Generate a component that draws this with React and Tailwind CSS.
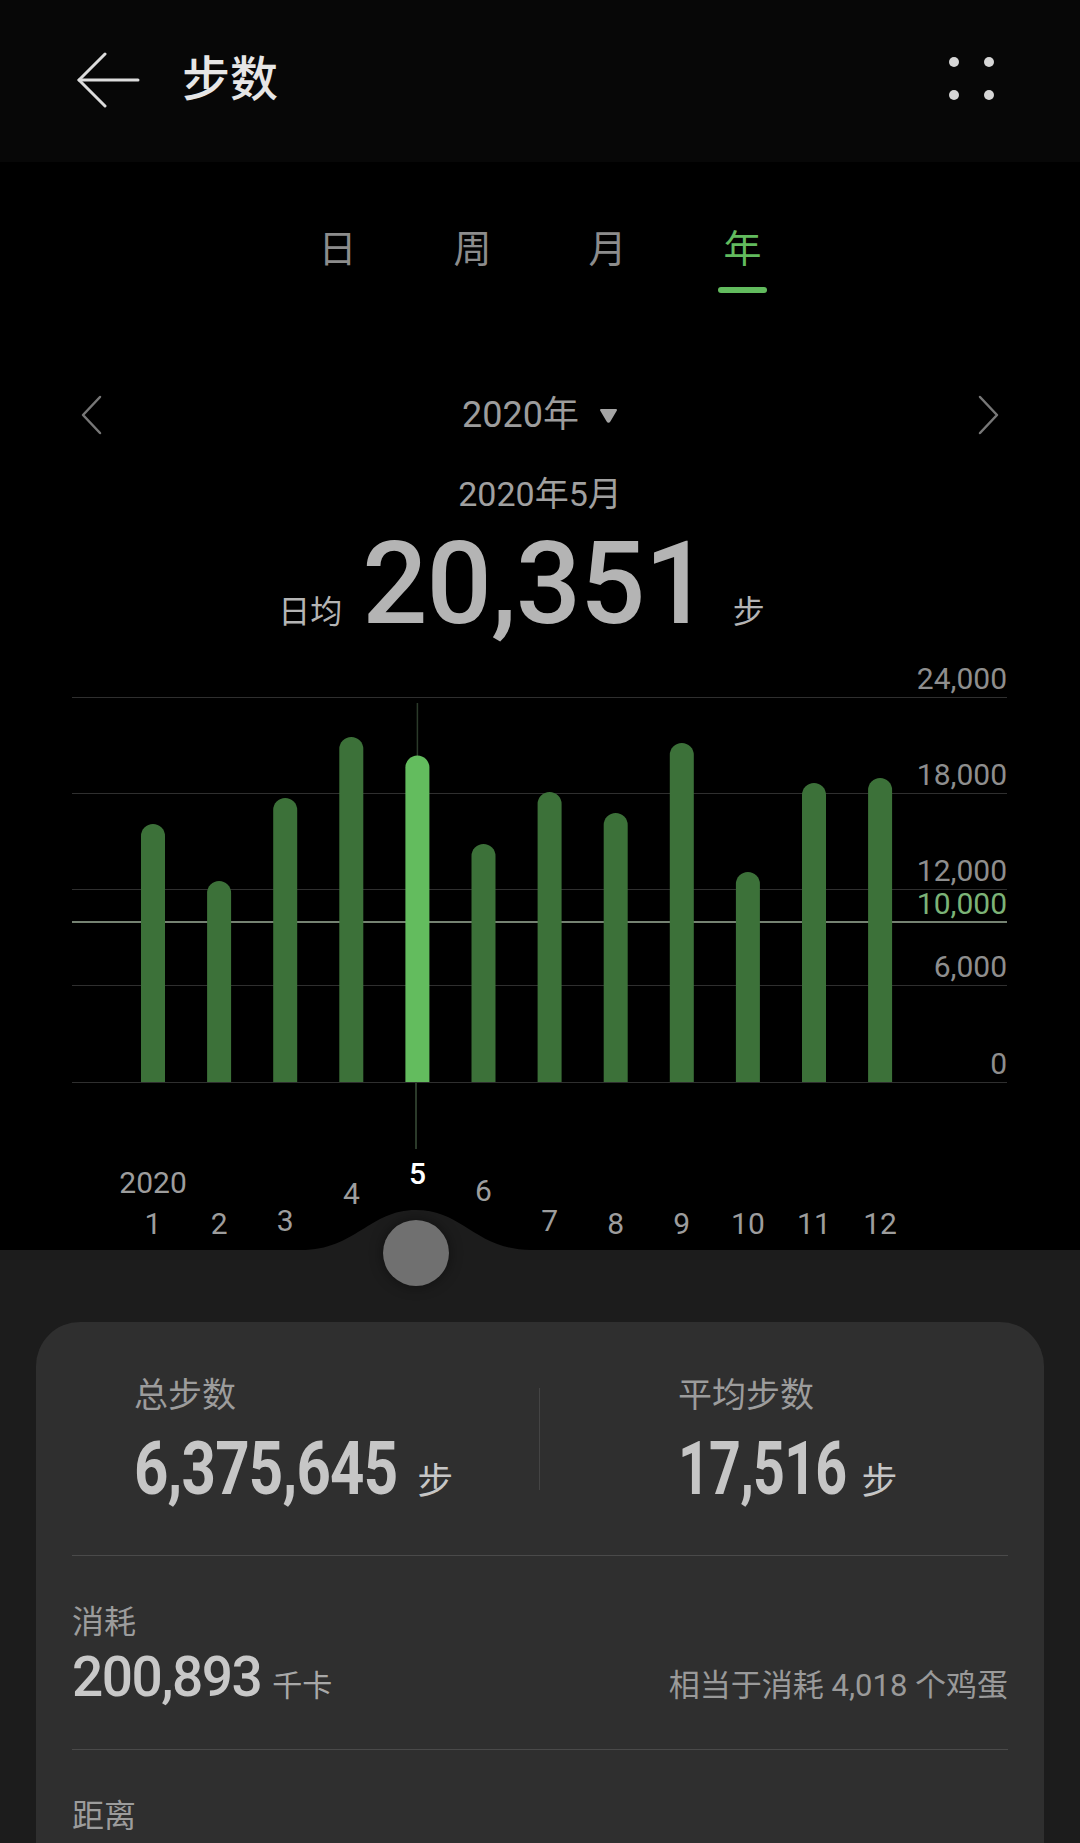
import React from 'react'

const months = [
  { m: '1', v: 16080, mb: 'mb-[11px]' },
  { m: '2', v: 12530, mb: 'mb-[11px]' },
  { m: '3', v: 17700, mb: 'mb-[14px]' },
  { m: '4', v: 21500, mb: 'mb-[41px]' },
  { m: '5', v: 20351, mb: 'mb-[61px]' },
  { m: '6', v: 14840, mb: 'mb-[44px]' },
  { m: '7', v: 18080, mb: 'mb-[14px]' },
  { m: '8', v: 16770, mb: 'mb-[11px]' },
  { m: '9', v: 21130, mb: 'mb-[11px]' },
  { m: '10', v: 13090, mb: 'mb-[11px]' },
  { m: '11', v: 18640, mb: 'mb-[11px]' },
  { m: '12', v: 18950, mb: 'mb-[11px]' },
]

const SELECTED = 4
const BASE = 422
const PLOT_H = 385
const MAX = 24000

// y axis: value, line y inside the plot, label top
const ticks = [
  { label: '24,000', y: 37, top: 'top-[4px]' },
  { label: '18,000', y: 133, top: 'top-[100px]' },
  { label: '12,000', y: 229, top: 'top-[196px]' },
  { label: '6,000', y: 325, top: 'top-[292px]' },
  { label: '0', y: 422, top: 'top-[389px]' },
]

function barPath(cx, v) {
  const top = BASE - (v / MAX) * PLOT_H
  return `M${cx - 12} ${BASE} V${top + 12} A12 12 0 0 1 ${cx + 12} ${top + 12} V${BASE} Z`
}

function Header() {
  return (
    <div className="h-[162px] bg-[#070707] flex items-start justify-between pt-[50px] pl-[77px] pr-[86px]">
      <div className="flex items-center h-[60px]">
        <svg width="64" height="58" viewBox="0 0 64 58" fill="none" stroke="#dcdcdc" strokeWidth="3" strokeLinecap="round" strokeLinejoin="round">
          <path d="M28 3 L2 29 L28 55" />
          <path d="M2 29 H61" />
        </svg>
        <span className="ml-[41px] text-[48px] leading-none font-medium text-[#e6e6e6]">步数</span>
      </div>
      <div className="grid grid-cols-2 gap-x-[25px] gap-y-[23px] mt-[7px]">
        <span className="w-[10px] h-[10px] rounded-full bg-[#d6d6d6]" />
        <span className="w-[10px] h-[10px] rounded-full bg-[#d6d6d6]" />
        <span className="w-[10px] h-[10px] rounded-full bg-[#d6d6d6]" />
        <span className="w-[10px] h-[10px] rounded-full bg-[#d6d6d6]" />
      </div>
    </div>
  )
}

function Tabs() {
  const tabs = ['日', '周', '月', '年']
  return (
    <div className="flex justify-center pt-[68px]">
      {tabs.map((t, i) => (
        <div key={t} className="w-[135px] flex flex-col items-center">
          <span className={i === 3 ? 'text-[38px] leading-none text-[#62bb5e]' : 'text-[38px] leading-none text-[#8c8c8c]'}>{t}</span>
          <span className={i === 3 ? 'mt-[19px] w-[49px] h-[6px] rounded-full bg-[#62bb5e]' : 'mt-[19px] w-[49px] h-[6px]'} />
        </div>
      ))}
    </div>
  )
}

function YearNav() {
  return (
    <div className="mt-[102px] h-[40px] flex items-center justify-between px-[80px]">
      <svg width="22" height="40" viewBox="0 0 22 40" fill="none" stroke="#777" strokeWidth="2.5" strokeLinecap="round" strokeLinejoin="round">
        <path d="M20 2 L3 20 L20 38" />
      </svg>
      <div className="flex items-center gap-[20px]">
        <span className="text-[36px] leading-none text-[#9c9c9c]">2020年</span>
        <svg width="19" height="15" viewBox="0 0 19 15">
          <path d="M2 2 H17 L10.5 13 Q9.5 14.5 8.5 13 Z" fill="#a5a5a5" stroke="#a5a5a5" strokeWidth="2" strokeLinejoin="round" />
        </svg>
      </div>
      <svg width="22" height="40" viewBox="0 0 22 40" fill="none" stroke="#777" strokeWidth="2.5" strokeLinecap="round" strokeLinejoin="round">
        <path d="M2 2 L19 20 L2 38" />
      </svg>
    </div>
  )
}

function Summary() {
  return (
    <div className="flex flex-col items-center">
      <div className="mt-[42px] text-[34px] leading-none text-[#a0a0a0]">2020年5月</div>
      <div className="mt-[15px] flex items-baseline justify-center pr-[37px] text-[#b4b4b4]">
        <span className="text-[32px] leading-none">日均</span>
        <span className="ml-[20px] text-[115px] leading-none font-medium tracking-[-1px]">20,351</span>
        <span className="ml-[24px] text-[32px] leading-none">步</span>
      </div>
    </div>
  )
}

function Chart() {
  const cx = (i) => 81 + i * 66.1
  return (
    <div className="relative mt-[19px] ml-[72px] w-[935px]">
      <div className="relative h-[423px]">
        <svg className="absolute inset-0" width="935" height="423" viewBox="0 0 935 423">
          {ticks.map((t) => (
            <line key={t.label} x1="0" x2="935" y1={t.y + 0.5} y2={t.y + 0.5} stroke="#2f2f2f" strokeWidth="1" />
          ))}
          <line x1="0" x2="935" y1="262" y2="262" stroke="#9cae99" strokeWidth="1.5" />
          <line x1={cx(SELECTED)} x2={cx(SELECTED)} y1="43" y2="423" stroke="#2b3a2a" strokeWidth="1.5" />
          {months.map((d, i) => (
            <path key={d.m} d={barPath(cx(i), d.v)} fill={i === SELECTED ? '#63bc5e' : '#3c7139'} />
          ))}
        </svg>
        {ticks.map((t) => (
          <span key={t.label} className={`absolute right-0 ${t.top} text-[30px] leading-none text-[#8e8e8e]`}>{t.label}</span>
        ))}
        <span className="absolute right-0 top-[229px] text-[30px] leading-none text-[#7cb377]">10,000</span>
      </div>
      <div className="absolute left-[343px] top-[423px] w-[1.5px] h-[66px] bg-[#2b3a2a]" />
      <div className="flex items-end h-[167px] pl-[48px]">
        {months.map((d, i) => (
          <div key={d.m} className={`w-[66.1px] flex flex-col items-center gap-[11px] ${d.mb}`}>
            {i === 0 && <span className="text-[30px] leading-none text-[#9d9d9d]">2020</span>}
            <span className={i === SELECTED ? 'text-[30px] leading-none font-medium text-white' : 'text-[30px] leading-none text-[#9d9d9d]'}>{d.m}</span>
          </div>
        ))}
      </div>
    </div>
  )
}

function StatsCard() {
  return (
    <div className="flex-1 mt-[72px] mx-[36px] rounded-t-[44px] bg-[#2f2f2f] flex flex-col">
      <div className="flex pt-[56px] pb-[49px]">
        <div className="w-[503px] pl-[98px]">
          <div className="text-[34px] leading-none text-[#9c9c9c]">总步数</div>
          <div className="mt-[19px] flex items-baseline text-[#c6c6c6]">
            {/* condensed figures */}
            <span className="inline-block origin-left scale-x-[0.8] mr-[-65px] text-[75px] leading-none font-bold tracking-[-1px]">6,375,645</span>
            <span className="ml-[19px] text-[36px] leading-none">步</span>
          </div>
        </div>
        <div className="w-px h-[102px] mt-[10px] bg-[#444]" />
        <div className="pl-[138px]">
          <div className="text-[34px] leading-none text-[#9c9c9c]">平均步数</div>
          <div className="mt-[19px] flex items-baseline text-[#c6c6c6]">
            <span className="inline-block origin-left scale-x-[0.74] mr-[-58px] text-[75px] leading-none font-bold tracking-[-1px]">17,516</span>
            <span className="ml-[14px] text-[36px] leading-none">步</span>
          </div>
        </div>
      </div>
      <div className="mx-[36px] h-px bg-[#4a4a4a]" />
      <div className="px-[36px] pt-[50px] pb-[44px]">
        <div className="text-[32px] leading-none text-[#9c9c9c]">消耗</div>
        <div className="mt-[12px] flex items-baseline justify-between">
          <div className="flex items-baseline text-[#c8c8c8]">
            <span className="text-[55px] leading-none font-medium tracking-[-1.5px]">200,893</span>
            <span className="ml-[11px] text-[30px] leading-none text-[#a8a8a8]">千卡</span>
          </div>
          <span className="text-[31px] leading-none text-[#9a9a9a]">相当于消耗 4,018 个鸡蛋</span>
        </div>
      </div>
      <div className="mx-[36px] h-px bg-[#4a4a4a]" />
      <div className="px-[36px] pt-[50px]">
        <div className="text-[32px] leading-none text-[#9c9c9c]">距离</div>
      </div>
    </div>
  )
}

export default function App() {
  return (
    <div className="w-[1080px] h-[1843px] overflow-hidden bg-black flex flex-col [font-family:Roboto,'Noto_Sans_CJK_SC',sans-serif]">
      <Header />
      <Tabs />
      <YearNav />
      <Summary />
      <Chart />
      <div className="relative flex-1 flex flex-col bg-[#1c1c1c]">
        {/* bump under the selected month */}
        <svg className="absolute bottom-full left-[301px]" width="230" height="41" viewBox="0 0 230 41">
          <path d="M0 41 C55 41 68 1 115 1 C162 1 175 41 230 41 Z" fill="#1c1c1c" />
        </svg>
        <div className="absolute left-[383px] top-[-30px] w-[66px] h-[66px] rounded-full bg-[#707070] shadow-[0_0_14px_rgba(0,0,0,0.45)]" />
        <StatsCard />
      </div>
    </div>
  )
}
